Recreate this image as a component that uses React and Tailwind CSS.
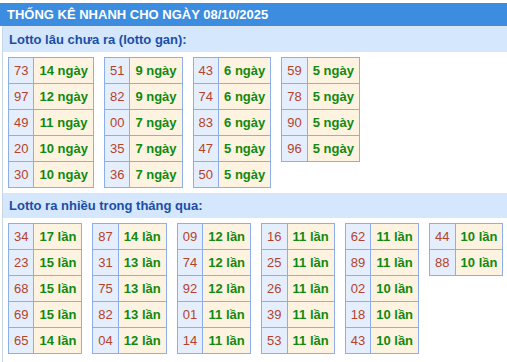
const gan = [
  [["73", 14], ["97", 12], ["49", 11], ["20", 10], ["30", 10]],
  [["51", 9], ["82", 9], ["00", 7], ["35", 7], ["36", 7]],
  [["43", 6], ["74", 6], ["83", 6], ["47", 5], ["50", 5]],
  [["59", 5], ["78", 5], ["90", 5], ["96", 5]],
];

const nhieu = [
  [["34", 17], ["23", 15], ["68", 15], ["69", 15], ["65", 14]],
  [["87", 14], ["31", 13], ["75", 13], ["82", 13], ["04", 12]],
  [["09", 12], ["74", 12], ["92", 12], ["01", 11], ["14", 11]],
  [["16", 11], ["25", 11], ["26", 11], ["39", 11], ["53", 11]],
  [["62", 11], ["89", 11], ["02", 10], ["18", 10], ["43", 10]],
  [["44", 10], ["88", 10]],
];

function LotoTable({ rows, unit }) {
  return (
    <table className="border-collapse border border-[#8daeed] text-[13px] leading-[15px] self-start">
      <tbody>
        {rows.map(([num, n]) => (
          <tr key={num}>
            <td className="border border-[#8daeed] bg-[#e4eefc] text-[#b5432b] px-[5px] py-[5px] text-center">{num}</td>
            <td className="border border-[#8daeed] bg-[#fef3e1] text-[#108a10] font-bold px-[5px] py-[5px] text-center whitespace-nowrap">
              {n} {unit}
            </td>
          </tr>
        ))}
      </tbody>
    </table>
  );
}

function Section({ title, tables, unit }) {
  return (
    <div>
      <div className="h-[25px] bg-[#d4e7fc] pl-[6px] flex items-center text-[13px] font-bold text-[#1c4ea6]">{title}</div>
      <div className="flex gap-[10px] pl-[5px] py-[5px]">
        {tables.map((rows, i) => (
          <LotoTable key={i} rows={rows} unit={unit} />
        ))}
      </div>
    </div>
  );
}

export default function App() {
  return (
    <div className="bg-white min-h-[362px] pt-[3px] font-['Liberation_Sans',Arial,sans-serif]">
      <div className="h-[23px] bg-[#3c8ddf] px-[7px] flex items-center text-white text-[13px] font-bold">
        THỐNG KÊ NHANH CHO NGÀY 08/10/2025
      </div>
      <div className="ml-[2px] border-l border-[#c9d6e4] border-t border-t-[#dde5ee] min-h-[340px]">
        <Section title="Lotto lâu chưa ra (lotto gan):" tables={gan} unit="ngày" />
        <Section title="Lotto ra nhiều trong tháng qua:" tables={nhieu} unit="lần" />
      </div>
    </div>
  );
}
